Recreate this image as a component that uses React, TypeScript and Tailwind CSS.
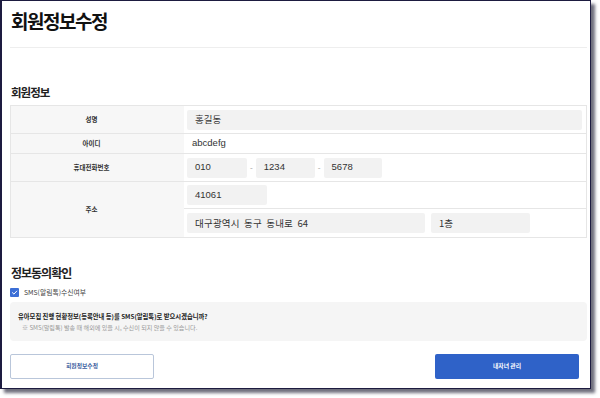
import React from "react";

const kr = '"Noto Sans CJK KR", "Noto Sans", sans-serif';
const mix = '"Liberation Sans", "Noto Sans CJK KR", sans-serif';

function Field({ w, children }: { w: string; children: React.ReactNode }) {
  return (
    <div
      className={`flex h-[20px] items-center rounded-[2px] bg-[#f2f2f2] pl-[8px] text-[9.5px] text-[#333] ${w}`}
      style={{ fontFamily: mix }}
    >
      {children}
    </div>
  );
}

function Label({ children }: { children: React.ReactNode }) {
  return (
    <div className="flex w-[173px] shrink-0 items-center justify-center bg-[#f7f7f7] pr-[12px] text-[6.5px] font-bold text-[#333]">
      {children}
    </div>
  );
}

export default function App() {
  return (
    <div className="h-[398px] w-[600px] bg-white" style={{ fontFamily: kr }}>
      <div className="flex h-[389px] w-[591px] flex-col border border-l-2 border-[#1d1b40] bg-white pl-[8px] pr-[3px] shadow-[4px_4px_3px_rgba(50,50,70,0.7)]">
        <h1 className="mt-[8px] h-[24px] pl-[1px] text-[19px] font-bold leading-[24px] tracking-[-1.5px] text-[#111]">
          회원정보수정
        </h1>
        <div className="mt-[14px] h-px bg-[#eeeeee]" />

        <h2 className="mt-[36px] h-[16px] pl-[1px] text-[11.5px] font-bold leading-[16px] tracking-[-1px] text-[#222]">
          회원정보
        </h2>

        <div className="mt-[5px] flex flex-col border border-[#e6e6e6]">
          <div className="flex h-[28px] border-b border-[#e6e6e6]">
            <Label>성명</Label>
            <div className="flex flex-1 items-center pl-[3px] pr-[4px]">
              <Field w="flex-1">
                <span style={{ fontFamily: kr }}>홍길동</span>
              </Field>
            </div>
          </div>
          <div className="flex h-[20px] border-b border-[#e6e6e6]">
            <Label>아이디</Label>
            <div className="flex flex-1 items-center pl-[8px] text-[9.5px] text-[#333]" style={{ fontFamily: mix }}>
              abcdefg
            </div>
          </div>
          <div className="flex h-[28px] border-b border-[#e6e6e6]">
            <Label>휴대전화번호</Label>
            <div className="flex flex-1 items-center gap-[3px] pl-[3px] text-[#999]">
              <Field w="w-[60px]">010</Field>
              <span className="text-[8px]">-</span>
              <Field w="w-[59px]">1234</Field>
              <span className="text-[8px]">-</span>
              <Field w="w-[58px]">5678</Field>
            </div>
          </div>
          <div className="flex h-[55px]">
            <Label>주소</Label>
            <div className="flex flex-1 flex-col">
              <div className="flex h-[27px] items-center border-b border-[#e6e6e6] pl-[3px]">
                <Field w="w-[80px]">41061</Field>
              </div>
              <div className="flex h-[28px] items-center gap-[6px] pl-[3px]">
                <Field w="w-[238px]">
                  <span className="tracking-[0.2px] [word-spacing:2px]" style={{ fontFamily: kr }}>
                    대구광역시 동구 동내로 64
                  </span>
                </Field>
                <Field w="w-[99px]">
                  <span style={{ fontFamily: kr }}>1층</span>
                </Field>
              </div>
            </div>
          </div>
        </div>

        <h2 className="mt-[27px] h-[16px] pl-[1px] text-[12px] font-bold leading-[16px] tracking-[-1px] text-[#222]">
          정보동의확인
        </h2>

        <div className="mt-[7px] flex h-[9px] items-center gap-[5px]">
          <div className="flex h-[9px] w-[9px] items-center justify-center rounded-[1px] bg-[#3c6fd6]">
            <svg width="7" height="7" viewBox="0 0 10 10" fill="none">
              <path d="M2 5.2 4.2 7.3 8.2 3" stroke="white" strokeWidth="1.4" strokeLinecap="round" strokeLinejoin="round" />
            </svg>
          </div>
          <span className="text-[6.8px] text-[#444]">SMS(알림톡)수신여부</span>
        </div>

        <div className="mt-[5px] flex h-[39px] flex-col justify-center gap-[2px] rounded-[4px] bg-[#f5f5f5] pl-[8px]">
          <p className="text-[6.3px] font-bold leading-[9px] text-[#222]">
            유아모집 진행 현황정보(등록안내 등)를 SMS(알림톡)로 받으시겠습니까?
          </p>
          <p className="pl-[4px] text-[6.1px] leading-[9px] text-[#999]">
            ※ SMS(알림톡) 발송 때 해외에 있을 시, 수신이 되지 않을 수 있습니다.
          </p>
        </div>

        <div className="mt-[13px] flex justify-between pr-[8px]">
          <button
            type="button"
            className="flex h-[25px] w-[144px] items-center justify-center rounded-[2px] border border-[#b9c6da] bg-white text-[5.8px] font-bold text-[#3a5d9e]"
          >
            회원정보수정
          </button>
          <button
            type="button"
            className="flex h-[25px] w-[144px] items-center justify-center rounded-[2px] bg-[#2f62c8] text-[5.8px] font-bold text-white"
          >
            내자녀 관리
          </button>
        </div>
      </div>
    </div>
  );
}
